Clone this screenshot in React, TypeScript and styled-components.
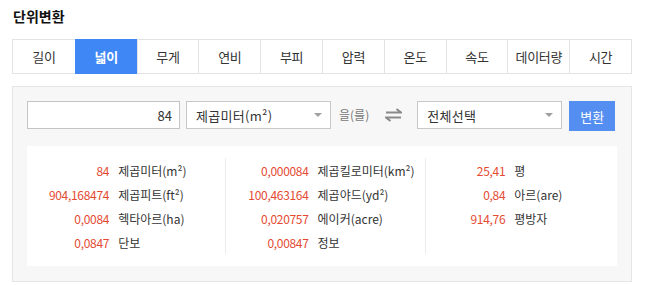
import React from "react";
import styled, { createGlobalStyle } from "styled-components";

const GlobalStyle = createGlobalStyle`
  html, body { margin: 0; padding: 0; background: #fff; }
  body { font-family: "Noto Sans CJK KR", "Noto Sans", sans-serif; color: #333; }
  * { box-sizing: border-box; }
`;

const Page = styled.div`
  width: 650px;
  padding: 7px 18px 0 12px;
`;

const Title = styled.h1`
  margin: 0 0 0 1px;
  font-size: 14px;
  font-weight: 700;
  line-height: 18px;
  color: #111;
  height: 32px;
`;

const Tabs = styled.div`
  display: grid;
  grid-template-columns: repeat(10, 1fr);
  border: 1px solid #e3e3e3;
  height: 35px;
`;

const Tab = styled.div<{ $active?: boolean }>`
  display: flex;
  align-items: center;
  justify-content: center;
  font-size: 13px;
  letter-spacing: -0.3px;
  color: ${(p) => (p.$active ? "#fff" : "#333")};
  font-weight: ${(p) => (p.$active ? 700 : 400)};
  background: ${(p) => (p.$active ? "#3f87f5" : "#fff")};
  border-left: 1px solid ${(p) => (p.$active ? "#3f87f5" : "#e3e3e3")};
  margin: ${(p) => (p.$active ? "-1px 0" : "0")};
  &:first-child { border-left: none; }
`;

const Panel = styled.div`
  margin-top: 12px;
  border: 1px solid #e6e6e6;
  background: #f7f7f7;
  padding: 14px 14px 15px 14px;
`;

const FormRow = styled.div`
  display: flex;
  align-items: flex-start;
  height: 30px;
`;

const NumberInput = styled.input`
  width: 153px;
  height: 28px;
  border: 1px solid #c4c4c4;
  background: #fff;
  text-align: right;
  padding: 0 7px;
  font-family: inherit;
  font-size: 13px;
  color: #333;
  outline: none;
`;

const SelectBox = styled.div<{ $ml: number }>`
  margin-left: ${(p) => p.$ml}px;
  width: 145px;
  height: 28px;
  border: 1px solid #c8c8c8;
  background: #fff;
  display: flex;
  align-items: center;
  justify-content: space-between;
  padding: 0 8px 0 9px;
  font-size: 13px;
  color: #333;
  letter-spacing: 0.3px;
`;

const Caret = styled.span`
  width: 0;
  height: 0;
  border-left: 4px solid transparent;
  border-right: 4px solid transparent;
  border-top: 4px solid #a0a0a0;
`;

const Particle = styled.span`
  margin-left: 8px;
  font-size: 12px;
  line-height: 28px;
  color: #777;
`;

const SwapIcon = styled.svg`
  margin: 7px 0 0 16px;
  display: block;
`;

const Button = styled.button`
  margin-left: 7px;
  width: 46px;
  height: 30px;
  border: none;
  background: #548ef0;
  color: #fff;
  font-family: inherit;
  font-size: 13px;
  padding: 0;
`;

const Results = styled.div`
  margin-top: 15px;
  background: #fff;
  padding: 12px 0;
  display: grid;
  grid-template-columns: 198px 200px 1fr;
`;

const Column = styled.div`
  & + & { border-left: 1px solid #ececec; }
`;

const Row = styled.div`
  display: flex;
  align-items: center;
  height: 24px;
  font-size: 12px;
`;

const Num = styled.span`
  width: 41.5%;
  text-align: right;
  color: #e44a32;
  letter-spacing: -0.3px;
`;

const Label = styled.span`
  margin-left: 9px;
  color: #333;
`;

const tabs = ["길이", "넓이", "무게", "연비", "부피", "압력", "온도", "속도", "데이터량", "시간"];

const columns: [string, string][][] = [
  [
    ["84", "제곱미터(m²)"],
    ["904,168474", "제곱피트(ft²)"],
    ["0,0084", "헥타아르(ha)"],
    ["0,0847", "단보"],
  ],
  [
    ["0,000084", "제곱킬로미터(km²)"],
    ["100,463164", "제곱야드(yd²)"],
    ["0,020757", "에이커(acre)"],
    ["0,00847", "정보"],
  ],
  [
    ["25,41", "평"],
    ["0,84", "아르(are)"],
    ["914,76", "평방자"],
  ],
];

export default function App() {
  return (
    <Page>
      <GlobalStyle />
      <Title>단위변환</Title>
      <Tabs>
        {tabs.map((t) => (
          <Tab key={t} $active={t === "넓이"}>
            {t}
          </Tab>
        ))}
      </Tabs>
      <Panel>
        <FormRow>
          <NumberInput defaultValue="84" />
          <SelectBox $ml={6}>
            <span>제곱미터(m²)</span>
            <Caret />
          </SelectBox>
          <Particle>을(를)</Particle>
          <SwapIcon width="17" height="14" viewBox="0 0 17 14">
            <path d="M1 4.5 H16 L11.5 1" fill="none" stroke="#8a8a8a" strokeWidth="2" />
            <path d="M16 9.5 H1 L5.5 13" fill="none" stroke="#8a8a8a" strokeWidth="2" />
          </SwapIcon>
          <SelectBox $ml={15}>
            <span>전체선택</span>
            <Caret />
          </SelectBox>
          <Button>변환</Button>
        </FormRow>
        <Results>
          {columns.map((col, i) => (
            <Column key={i}>
              {col.map(([n, l]) => (
                <Row key={l}>
                  <Num>{n}</Num>
                  <Label>{l}</Label>
                </Row>
              ))}
            </Column>
          ))}
        </Results>
      </Panel>
    </Page>
  );
}
